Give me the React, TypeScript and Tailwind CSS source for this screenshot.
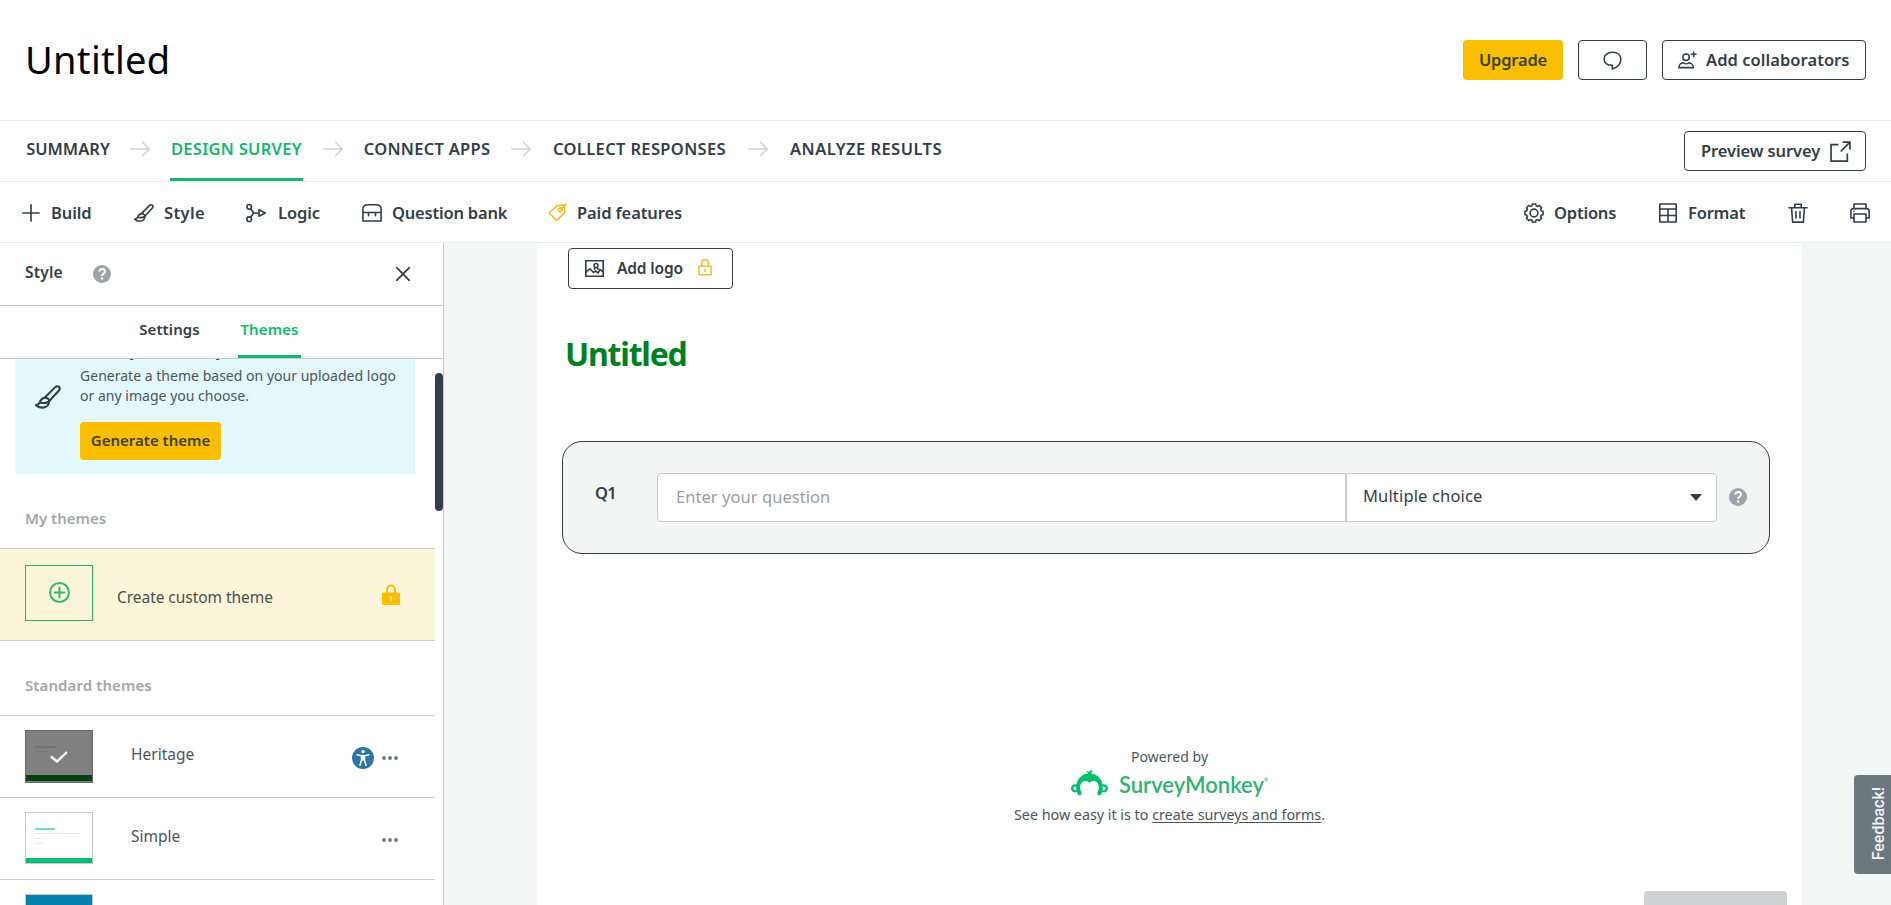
import type { ReactNode } from 'react'

type IconProps = { className?: string; children?: ReactNode }

function Icon({ className = 'size-5', children }: IconProps) {
  return (
    <svg
      viewBox="0 0 20 20"
      fill="none"
      stroke="currentColor"
      strokeWidth="1.6"
      strokeLinecap="round"
      strokeLinejoin="round"
      className={`shrink-0 ${className}`}
    >
      {children}
    </svg>
  )
}

const StepArrow = () => (
  <Icon className="size-5 text-[#d0d2d3]">
    <path d="M.8 10H19M12.5 3.2 19.2 10l-6.7 6.8" />
  </Icon>
)

const BrushIcon = ({ className }: IconProps) => (
  <Icon className={className}>
    <path d="M7.4 10.6 15.6 2.4c.9-.9 2.1-.9 2.8-.2.8.8.8 1.900 0 2.800L10.800 13.300" />
    <path d="M7.4 10.6c1.900-.2 3.600 1 3.500 2.900-.3 2.700-2.400 4.700-5.300 4.700-2 0-3.600-.7-4.900-2.100 1.500 0 2.300-.7 2.900-2 .8-2 1.900-3.200 3.800-3.500ZM3.600 14.200c2.300.7 4.600.5 6.600-.4" />
  </Icon>
)

const PlusIcon = () => (
  <Icon className="size-[18px]">
    <path d="M10 1v18M1 10h18" strokeWidth="1.8" />
  </Icon>
)

const LogicIcon = () => (
  <Icon>
    <circle cx="3.2" cy="3.8" r="2.3" />
    <circle cx="3.2" cy="16.200" r="2.3" />
    <path d="M4.500 5.700 7.800 10 4.500 14.300M7.800 10h5.200M13 6.800l6.200 3.200-6.200 3.200Z" strokeWidth="1.700" />
  </Icon>
)

const BankIcon = () => (
  <Icon>
    <path d="M.9 18V6.500C.9 3.700 2.800 1.800 5.500 1.800h9c2.700 0 4.600 1.900 4.600 4.700V18ZM.9 9.500h18.200M6.500 9.500v3.200M13.500 9.500v3.200" />
  </Icon>
)

const TagIcon = () => (
  <Icon className="size-[19px] text-[#f2bd22]">
    <path d="M1.2 10.5 9.800 2.800l7.500-.6.500 7.900-8.800 8.200ZM18.900 1.200l-5.300 5.300" />
    <circle cx="12.800" cy="7.200" r="2" />
  </Icon>
)

// eight-toothed cog, listed tooth by tooth
const cog = Array.from({ length: 8 }, (_, i) => {
  const base = (i * Math.PI) / 4
  return [
    [-0.27, 7.6],
    [-0.18, 9.2],
    [0.18, 9.2],
    [0.27, 7.6],
  ]
    .map(([a, r]) => `${(10 + r * Math.sin(base + a)).toFixed(2)},${(10 - r * Math.cos(base + a)).toFixed(2)}`)
    .join(' ')
}).join(' ')

const GearIcon = () => (
  <Icon>
    <polygon points={cog} />
    <circle cx="10" cy="10" r="3.9" />
  </Icon>
)

const FormatIcon = () => (
  <Icon>
    <path d="M1.8 1h16.400v18H1.800ZM1.800 6h16.400M1.800 12.500h16.400M10 6v13" />
  </Icon>
)

const TrashIcon = () => (
  <Icon>
    <path d="M.9 4.800h18.200M6.800 4.800V1.200h6.400v3.600M3.600 4.800l1 14.300h10.800l1-14.300M8 8.500v6.500M12 8.500v6.500" />
  </Icon>
)

const PrinterIcon = () => (
  <Icon>
    <path d="M4 5.600V1h12v4.600M4 15H.9V8.200c0-1.600 1-2.600 2.600-2.600h13c1.600 0 2.600 1 2.600 2.600V15H16M4 11h12v8H4ZM3.800 8.300h.1" />
  </Icon>
)

const HelpIcon = () => (
  <svg viewBox="0 0 18 18" className="size-[18px] shrink-0" fill="none">
    <circle cx="9" cy="9" r="9" fill="#9da3a8" />
    <path d="M6.300 6.800c0-3.800 5.700-3.500 5.700-.2 0 2.100-2.900 2-2.900 4.500" stroke="#fff" strokeWidth="1.9" />
    <circle cx="9.100" cy="13.500" r="1.2" fill="#fff" />
  </svg>
)

const LockOutline = () => (
  <svg viewBox="0 0 14 17" className="-mt-0.5 h-[17px] w-3.5 shrink-0" fill="none" stroke="#efbe35" strokeWidth="1.6">
    <path d="M1 7.200h12v8.600H1ZM3.700 7V4a3.300 3.300 0 0 1 6.600 0v3M7 10v3" />
  </svg>
)

const Dots = () => (
  <svg viewBox="0 0 16 4" className="h-1 w-4 shrink-0" fill="#6b787f">
    <circle cx="2" cy="2" r="1.9" />
    <circle cx="8" cy="2" r="1.9" />
    <circle cx="14" cy="2" r="1.9" />
  </svg>
)

const MonkeyLogo = () => (
  <svg viewBox="0 0 37 27" className="h-[27px] w-[37px] shrink-0" fill="#00bf6f">
    <path d="M5.500 15.300C6.800 9.200 11.300 5 17 4.600 16.700 3.500 15.900 2.800 14.800 2.300c1.500-.3 2.600.1 3.300 1C18.500 1.800 19.500.8 21.500.3c-.8 1-1.200 1.700-1.200 2.500.7-.4 1.600-.4 2.500 0-1.300.3-2.300.9-2.800 1.800 5.700.6 10.200 4.800 11.500 10.700 3.100-.7 5.500 1.100 5.500 4 0 3.200-3 5-5.900 3.800-.2 1.500-1 2.700-2.100 3.100-1.200.4-2.600-.3-2.600-1.800 0-1.700 1.400-2.700 1.400-6 0-3.700-2.200-6.400-5.300-6.400-1.800 0-3.200.8-4 2.100-.8-1.300-2.200-2.100-4-2.100-3.200 0-5.400 2.700-5.400 6.400 0 3.300 1.500 4.300 1.500 6 0 1.500-1.400 2.200-2.600 1.800-1.200-.4-1.900-1.600-2.100-3.100C3 24.300 0 22.500 0 19.300c0-2.900 2.400-4.700 5.500-4Z" />
    <path d="M5.200 17.500c-1.600-.4-2.800.4-2.800 1.800 0 1.500 1.300 2.300 2.900 1.600ZM31.800 17.500c1.600-.4 2.800.4 2.800 1.800 0 1.500-1.300 2.300-2.900 1.600Z" fill="#fff" />
  </svg>
)

const steps = [
  { label: 'SUMMARY', width: 'w-[84px]', tracking: 'tracking-normal' },
  { label: 'DESIGN SURVEY', width: 'w-[133px]', tracking: 'tracking-[0.28px]', active: true },
  { label: 'CONNECT APPS', width: 'w-[128px]', tracking: 'tracking-[0.28px]' },
  { label: 'COLLECT RESPONSES', width: 'w-[177px]', tracking: 'tracking-[0.35px]' },
  { label: 'ANALYZE RESULTS', width: 'w-[156px]', tracking: 'tracking-[0.45px]' },
]

const tools = [
  { label: 'Build', icon: <PlusIcon />, width: 'w-[112px]', style: 'gap-[11px] tracking-[-0.1px]' },
  { label: 'Style', icon: <BrushIcon />, width: 'w-[112px]', style: 'gap-[10px] tracking-[0.4px]' },
  { label: 'Logic', icon: <LogicIcon />, width: 'w-[116px]', style: 'gap-3 tracking-[-0.1px]' },
  { label: 'Question bank', icon: <BankIcon />, width: 'w-[186px]', style: 'gap-[10px] tracking-[-0.2px]' },
  { label: 'Paid features', icon: <TagIcon />, width: 'w-[150px]', style: 'gap-[10px] tracking-[-0.1px]' },
]

function Header() {
  return (
    <header className="flex h-[121px] items-center justify-between border-b border-[#e9ebeb] px-[25px]">
      <h1 className="pb-0.5 text-[38px] leading-[48px] tracking-[0.3px] text-black">Untitled</h1>
      <div className="flex h-10 gap-[15px] font-semibold">
        <button className="w-[100px] rounded bg-[#f9be00] text-[16.5px] tracking-[-0.2px] text-[#3e4229]">Upgrade</button>
        <button className="flex w-[69px] items-center justify-center rounded border border-[#333e48]">
          <Icon className="size-[19px]">
            <path d="M9.800 19v-4C4.600 15 1.200 12.500 1.200 8.300 1.200 4.200 4.800 1.300 10 1.300s8.800 2.900 8.800 7.200c0 4.500-3.200 8.600-9 10.500Z" />
          </Icon>
        </button>
        <button className="flex w-[204px] items-center gap-[9px] rounded border border-[#333e48] pl-[15px] text-[16.5px] tracking-[0.05px]">
          <Icon className="size-[19px]">
            <circle cx="8.500" cy="6.500" r="3.4" />
            <path d="M.9 17.500c0-3 2.200-5 4.700-5 1.500 1.200 4.300 1.200 5.800 0 2.500 0 4.700 2 4.700 5ZM16.500 1v5M14 3.500h5" />
          </Icon>
          <span className="whitespace-nowrap">Add collaborators</span>
        </button>
      </div>
    </header>
  )
}

function StepNav() {
  return (
    <nav className="flex h-[61px] items-center justify-between border-b border-[#e9ebeb] pr-[25px] pl-[26px]">
      <div className="flex h-full">
        {steps.map((step, i) => (
          <div key={step.label} className="flex h-full">
            {i > 0 && (
              <div className="mx-5 pt-[18px]">
                <StepArrow />
              </div>
            )}
            <div
              className={`${step.width} ${step.tracking} h-[60px] border-b-[3px] pt-[16px] text-center text-[16.5px] leading-6 font-semibold whitespace-nowrap ${
                step.active ? 'border-[#12b96f] text-[#12b96f]' : 'border-transparent'
              }`}
            >
              {step.label}
            </div>
          </div>
        ))}
      </div>
      <button className="flex h-10 w-[182px] items-center gap-2.5 rounded border border-[#333e48] pl-4 text-[16.5px] font-semibold">
        <span className="w-[119px] pt-px tracking-[-0.1px] whitespace-nowrap">Preview survey</span>
        <Icon className="size-[21px]">
          <path d="M8 3.500H1v15.600h15.500V12M12 1h7v7M19 1l-8.800 9" strokeLinecap="butt" strokeLinejoin="miter" />
        </Icon>
      </button>
    </nav>
  )
}

function Toolbar() {
  return (
    <div className="flex h-[61px] items-center justify-between border-b border-[#e9ebeb] pt-px pr-[21px] pl-[22px] text-[16.5px] font-semibold">
      <div className="flex">
        {tools.map((tool) => (
          <div key={tool.label} className={`flex items-center whitespace-nowrap ${tool.width} ${tool.style}`}>
            {tool.icon}
            <span className="pt-px">{tool.label}</span>
          </div>
        ))}
      </div>
      <div className="flex items-center tracking-[-0.2px]">
        <div className="flex w-[134px] items-center gap-2.5">
          <GearIcon />
          <span className="pt-px">Options</span>
        </div>
        <div className="flex w-[130px] items-center gap-2.5">
          <FormatIcon />
          <span className="pt-px">Format</span>
        </div>
        <div className="flex gap-[42px]">
          <TrashIcon />
          <PrinterIcon />
        </div>
      </div>
    </div>
  )
}

function SimpleThumb() {
  return (
    <div className="flex h-[52px] w-[68px] flex-col justify-between border border-[#c8cbcc] bg-white">
      <div className="pt-[15px] pl-[9px]">
        <div className="h-[2px] w-5 bg-[#6fdcaa]" />
        <div className="mt-[3px] h-px w-[45px] bg-gray-200" />
        <div className="mt-1 h-px w-2 bg-gray-200" />
        <div className="mt-1 h-px w-2 bg-gray-200" />
      </div>
      <div className="h-[5px] bg-[#00bf6f]" />
    </div>
  )
}

function StylePanel() {
  return (
    <aside className="flex w-[444px] shrink-0 flex-col border-r border-[#c9cccd]">
      <div className="flex h-[63px] shrink-0 items-center border-b border-[#c9cccd] pl-[25px]">
        <span className="w-[68px] pb-0.5 text-[15.5px] font-semibold tracking-[0.2px]">Style</span>
        <HelpIcon />
        <Icon className="ml-[285px] size-[14px]">
          <path d="M1 1l18 18M19 1 1 19" strokeWidth="2.5" />
        </Icon>
      </div>
      <div className="flex h-[53px] shrink-0 justify-center gap-[35px] border-b border-[#c9cccd] pr-1 text-[15px] leading-[22px] font-semibold">
        <div className="w-[65px] pt-3 pr-0.5 text-center tracking-[0.1px]">Settings</div>
        <div className="w-[63px] border-b-[3px] border-[#12b96f] pt-3 text-center tracking-[0.1px] text-[#12b96f]">Themes</div>
      </div>

      {/* the list is scrolled, so the promo card starts above the visible area */}
      <div className="flex min-h-0 flex-1 overflow-hidden">
        <div className="w-[435px] shrink-0">
          <div className="-mt-[19px] ml-[15px] flex h-[134px] w-[400px] bg-[#e3f8fa]">
            <div className="w-[65px] pt-[44px] pl-5">
              <BrushIcon className="size-[26px]" />
            </div>
            <div>
              <p className="pt-px text-[15px] leading-5 font-semibold">Match your identity</p>
              <p className="mt-[5px] text-[14px] leading-5 tracking-[0.02px] whitespace-nowrap text-[#4a565e]">
                Generate a theme based on your uploaded logo
                <br />
                or any image you choose.
              </p>
              <button className="mt-4 h-[38px] w-[141px] rounded bg-[#f9be00] pb-0.5 text-[15px] font-semibold text-[#3e4229]">
                Generate theme
              </button>
            </div>
          </div>

          <h3 className="h-[75px] border-b border-[#c9cccd] pt-8 pl-[25px] text-[15px] leading-6 font-semibold text-[#a2a7aa]">
            My themes
          </h3>
          <div className="flex h-[92px] border-b border-[#c9cccd] bg-[#fcf5d9] pl-[25px]">
            <div className="mt-4 flex h-14 w-[68px] justify-center border border-[#2bb36c] pt-4 text-[#2bbb70]">
              <Icon className="size-[21px]">
                <circle cx="10" cy="10" r="9" strokeWidth="1.9" />
                <path d="M10 5.500v9M5.500 10h9" strokeWidth="1.9" />
              </Icon>
            </div>
            <div className="w-[265px] pt-[36px] pl-6 text-[15.5px] leading-6 tracking-[-0.05px] text-[#4b5049]">Create custom theme</div>
            <svg viewBox="0 0 18 21" className="mt-[35px] ml-6 h-[21px] w-[18px]">
              <path d="M5 9V5.500a4 4 0 0 1 8 0V9" fill="none" stroke="#f9be00" strokeWidth="2" />
              <rect y="8.500" width="18" height="12.500" rx="1.500" fill="#f9be00" />
              <path d="M9 12v4.500" stroke="#fff" strokeWidth="1.500" />
            </svg>
          </div>
          <h3 className="h-[75px] border-b border-[#c9cccd] pt-8 pl-[25px] text-[15px] leading-6 font-semibold tracking-[0.1px] text-[#a2a7aa]">
            Standard themes
          </h3>

          <div className="flex h-[82px] border-b border-[#c9cccd] pl-[25px]">
            <div className="mt-[14px] flex h-[53px] w-[68px] flex-col border border-[#666] bg-[#808080]">
              <div className="flex h-[44px] pt-[15px] pl-[9px]">
                <div>
                  <div className="h-[2px] w-[22px] bg-[#6a786d]" />
                  <div className="mt-[3px] h-px w-4 bg-[#777]" />
                </div>
                <svg viewBox="0 0 18 12" className="mt-[5px] -ml-[7px] h-3 w-[18px]" fill="none" stroke="#fff" strokeWidth="2.4">
                  <path d="m1 5.500 6 5L17 1" />
                </svg>
              </div>
              <div className="h-[6px] shrink-0 bg-[#004311]" />
            </div>
            <div className="w-[259px] pt-[26px] pl-[38px] text-[15.5px] leading-6 text-[#4a565e]">Heritage</div>
            <div className="mt-[31px] flex h-[22px] items-center gap-2">
              <svg viewBox="0 0 22 22" className="size-[22px]">
                <circle cx="11" cy="11" r="11" fill="#2b77a3" />
                <circle cx="11" cy="4.600" r="1.700" fill="#fff" />
                <path d="M5.200 7.800 9.500 8.800v4.400L8 18.300M16.800 7.800 12.500 8.800v4.400l1.500 5.100" fill="none" stroke="#fff" strokeWidth="1.500" strokeLinecap="round" />
                <path d="M9 8h4v5.500H9Z" fill="#fff" />
              </svg>
              <Dots />
            </div>
          </div>

          <div className="flex h-[82px] border-b border-[#c9cccd] pl-[25px]">
            <div className="pt-[14px]">
              <SimpleThumb />
            </div>
            <div className="w-[289px] pt-[26px] pl-[38px] text-[15.5px] leading-6 text-[#4a565e]">Simple</div>
            <div className="pt-10">
              <Dots />
            </div>
          </div>
          <div className="mt-[14px] ml-[25px] h-14 w-[68px] border border-[#c8cbcc] bg-[#0480ad]" />
        </div>
        <div className="mt-[14px] h-[138px] w-2 shrink-0 rounded-full bg-[#333e48]" />
      </div>
    </aside>
  )
}

function SurveyCanvas() {
  return (
    <main className="flex-1 overflow-hidden bg-[#f4f6f6] pl-[93px]">
      <div className="h-full w-[1265px] bg-white pt-[5px] pl-[25px]">
        <button className="ml-1.5 flex h-[41px] w-[165px] items-center rounded border border-[#333e48] pl-4 text-left">
          <svg viewBox="0 0 19 17" className="h-[17px] w-[19px]" fill="none" stroke="currentColor" strokeWidth="1.6">
            <path d="M.8.8h17.400v15.400H.8ZM1 12 5 8.800 8.500 12.500 10.500 11l2.500 2 2-3.500 3.500 3M9 9.500l1.500-2M13.500 9.500 12 7.500" />
            <circle cx="11" cy="5.500" r="2" />
          </svg>
          <span className="ml-[13px] w-[81px] text-[15.5px] font-semibold tracking-[-0.15px]">Add logo</span>
          <LockOutline />
        </button>

        <h2 className="mt-[45px] ml-[3px] text-[32px] leading-[40px] font-bold tracking-[-1.2px] text-[#00801f]">Untitled</h2>

        <section className="mt-[67px] flex h-[113px] w-[1208px] items-center rounded-[20px] border border-[#333e48] bg-[#f3f5f5] pl-8">
          <span className="w-[62px] pb-2 text-[16.5px] font-semibold tracking-[-0.8px]">Q1</span>
          <div className="flex h-[49px] w-[1060px] rounded-sm border border-[#c9cccd] bg-white leading-[47px]">
            <div className="w-[689px] border-r-2 border-[#c9cccd] pl-[18px] text-[16.5px] leading-[46px] tracking-[0.05px] text-[#999fa2]">
              Enter your question
            </div>
            <div className="flex flex-1 items-center justify-between pr-3.5 pl-4 text-[16.5px] tracking-[0.15px]">
              <span className="pb-1">Multiple choice</span>
              <svg viewBox="0 0 12 7" className="h-[7px] w-3" fill="#333e48">
                <path d="M0 0h12L6 7Z" />
              </svg>
            </div>
          </div>
          <div className="ml-[12px] pb-0.5">
            <HelpIcon />
          </div>
        </section>

        <footer className="mt-[193px] flex w-[1215px] flex-col items-center text-[#4a565e]">
          <p className="text-[14px] leading-5 tracking-[0.05px]">Powered by</p>
          <div className="mt-0.5 flex h-[30px] gap-[11px]">
            <MonkeyLogo />
            <div className="flex font-[Lato] text-[22px] leading-[31px] font-semibold text-[#2eb56f]">
              SurveyMonkey
              <span className="text-[5px] leading-[22px]">®</span>
            </div>
          </div>
          <p className="mt-1 text-[14.3px] leading-6 whitespace-nowrap">
            See how easy it is to <span className="underline underline-offset-2">create surveys and forms</span>.
          </p>
        </footer>

        <div className="mt-[64px] ml-[1082px] h-10 w-[143px] rounded bg-[#d0d1d3]" />
      </div>
    </main>
  )
}

export default function App() {
  return (
    <div className="relative flex h-[905px] w-[1891px] flex-col overflow-hidden bg-white font-['Noto_Sans',sans-serif] text-[#333e48]">
      <Header />
      <StepNav />
      <Toolbar />
      <div className="flex min-h-0 flex-1">
        <StylePanel />
        <SurveyCanvas />
      </div>
      <button className="absolute top-[775px] right-0 flex h-[99px] w-[37px] items-center justify-center rounded-l bg-[#6b787f] pb-0.5 pl-3">
        <span className="rotate-180 font-[Roboto] text-[16px] leading-4 font-medium text-[#f0f3f4] [writing-mode:vertical-rl]">
          Feedback!
        </span>
      </button>
    </div>
  )
}
